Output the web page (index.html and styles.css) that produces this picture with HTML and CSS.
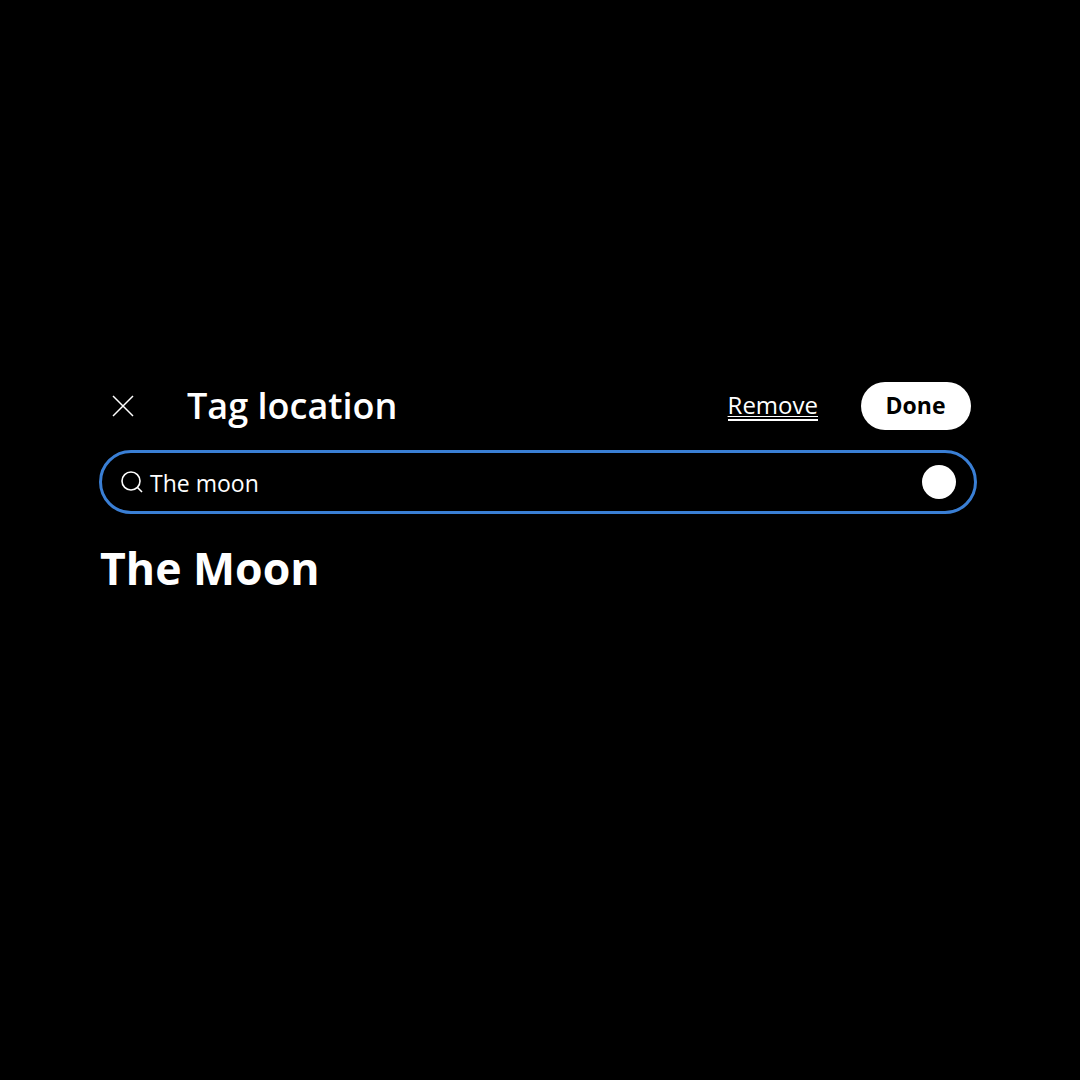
FILE: index.html
```html
<!DOCTYPE html>
<html lang="en">
<head>
    <meta charset="UTF-8">
    <title>Tag location</title>
    <link rel="stylesheet" href="styles.css">
</head>
<body>
    <div class="panel">
        <div class="top-bar">
            <div class="close-btn">
                <svg width="24" height="24" viewBox="0 0 24 24"><path d="M2 2L22 22M22 2L2 22" stroke="#fff" stroke-width="1.5" fill="none"/></svg>
            </div>
            <h1 class="title">Tag location</h1>
            <a class="remove">Remove</a>
            <button class="done">Done</button>
        </div>
        <div class="search">
            <svg class="search-icon" width="22" height="22" viewBox="0 0 22 22"><circle cx="10" cy="10" r="9" stroke="#fff" stroke-width="1.6" fill="none"/><path d="M16.5 16.5L21 21" stroke="#fff" stroke-width="1.6" fill="none"/></svg>
            <span class="query">The moon</span>
            <div class="clear"></div>
        </div>
        <h2 class="result">The Moon</h2>
    </div>
</body>
</html>
```

FILE: styles.css
```css
*{
    box-sizing: border-box;
}
body{
    background-color: #000;
    color: #fff;
    font-family: "Open Sans", sans-serif;
    margin: 0;
    padding: 382px 0 0 99px;
    height: 1080px;
}
.panel{
    width: 878px;
}
.top-bar{
    display: flex;
    align-items: center;
    height: 48px;
}
.close-btn{
    width: 88px;
    padding-left: 12px;
    display: flex;
    align-items: center;
}
.title{
    margin: 0;
    font-size: 36px;
    line-height: 48px;
    font-weight: 600;
    flex: 1;
}
.remove{
    font-size: 24px;
    line-height: 28px;
    padding-bottom: 0;
    border-bottom: 2px solid #fff;
    text-decoration: underline;
    text-decoration-thickness: 1px;
    text-underline-offset: 2px;
    margin-right: 43px;
}
.done{
    width: 110px;
    height: 48px;
    margin-right: 6px;
    border: none;
    border-radius: 24px;
    background-color: #fff;
    color: #000;
    font-family: inherit;
    font-size: 23px;
    line-height: 46px;
    font-weight: 700;
    padding: 0 1px 2px 0;
}
.search{
    display: flex;
    align-items: center;
    height: 64px;
    margin-top: 20px;
    padding: 0 19px 0 19px;
    border: 3px solid #3a7fd5;
    border-radius: 32px;
}
.search-icon{
    margin-right: 7px;
}
.query{
    flex: 1;
    font-size: 23px;
    line-height: 32px;
    padding-top: 1px;
}
.clear{
    width: 34px;
    height: 34px;
    border-radius: 50%;
    background-color: #fff;
    margin-right: -1px;
}
.result{
    margin: 21px 0 0 1px;
    font-size: 44.6px;
    line-height: 66px;
    font-weight: 700;
}
```
